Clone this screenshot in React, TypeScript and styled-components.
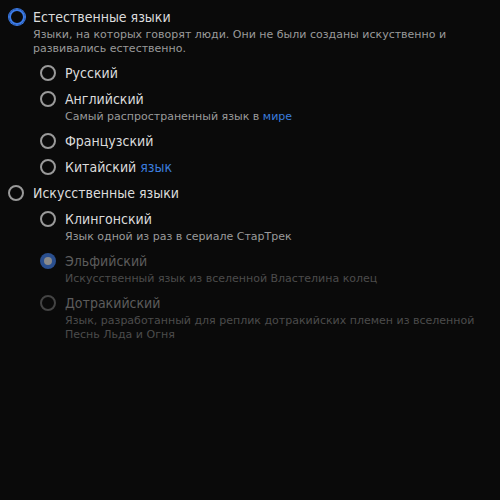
import React from "react";
import styled, { createGlobalStyle, css } from "styled-components";

const Global = createGlobalStyle`
  html, body { background: #0a0a0a; }
  body {
    margin: 8px;
    font-family: "DejaVu Sans", Verdana, sans-serif;
    color: #dedede;
  }
`;

const List = styled.div<{ $nested?: boolean }>`
  display: flex;
  flex-direction: column;
  gap: 8px;
  padding-left: ${(p) => (p.$nested ? "32px" : "0")};
  margin-top: ${(p) => (p.$nested ? "8px" : "0")};
`;

const Item = styled.div`
  display: flex;
  flex-direction: column;
`;

const Row = styled.label`
  display: flex;
  align-items: center;
  gap: 9px;
  height: 18px;
`;

const Circle = styled.span<{ $focus?: boolean; $checked?: boolean; $disabled?: boolean }>`
  box-sizing: border-box;
  width: 16px;
  height: 16px;
  border-radius: 50%;
  border: 2px solid #9a9a9a;
  display: flex;
  align-items: center;
  justify-content: center;
  flex: none;
  ${(p) =>
    p.$focus &&
    css`
      border-color: #3b7be8;
      box-shadow: 0 0 0 1px #3b7be8;
      margin: 0 -1px 0 1px;
    `}
  ${(p) =>
    p.$disabled &&
    css`
      border-color: #444;
    `}
  ${(p) =>
    p.$checked &&
    css`
      border: none;
      background: #2a4f8f;
      &::after {
        content: "";
        width: 8px;
        height: 8px;
        border-radius: 50%;
        background: #8a8a8a;
      }
    `}
`;

const Label = styled.span<{ $disabled?: boolean }>`
  font-family: "DejaVu Sans Condensed", "DejaVu Sans", sans-serif;
  font-stretch: condensed;
  font-size: 14px;
  line-height: 18px;
  color: ${(p) => (p.$disabled ? "#5c5c5c" : "#dcdcdc")};
`;

const Desc = styled.div<{ $disabled?: boolean; $indent: number }>`
  font-size: 11px;
  line-height: 14px;
  margin-top: 2px;
  padding-left: ${(p) => p.$indent}px;
  color: ${(p) => (p.$disabled ? "#4c4c4c" : "#9a9a9a")};
`;

const Link = styled.span`
  color: #3b7ddd;
`;

type Opt = {
  label: React.ReactNode;
  desc?: React.ReactNode;
  focus?: boolean;
  checked?: boolean;
  disabled?: boolean;
  children?: Opt[];
};

const data: Opt[] = [
  {
    label: "Естественные языки",
    desc: "Языки, на которых говорят люди. Они не были созданы искуственно и развивались естественно.",
    focus: true,
    children: [
      { label: "Русский" },
      { label: "Английский", desc: <>Самый распространенный язык в <Link>мире</Link></> },
      { label: "Французский" },
      { label: <>Китайский <Link>язык</Link></> },
    ],
  },
  {
    label: "Искусственные языки",
    children: [
      { label: "Клингонский", desc: "Язык одной из раз в сериале СтарТрек" },
      { label: "Эльфийский", desc: "Искусственный язык из вселенной Властелина колец", checked: true, disabled: true },
      {
        label: "Дотракийский",
        desc: "Язык, разработанный для реплик дотракийских племен из вселенной Песнь Льда и Огня",
        disabled: true,
      },
    ],
  },
];

function Option({ o }: { o: Opt }) {
  return (
    <Item>
      <Row>
        <Circle $focus={o.focus} $checked={o.checked} $disabled={o.disabled} />
        <Label $disabled={o.disabled}>{o.label}</Label>
      </Row>
      {o.desc && (
        <Desc $disabled={o.disabled} $indent={25}>
          {o.desc}
        </Desc>
      )}
      {o.children && (
        <List $nested>
          {o.children.map((c, i) => (
            <Option key={i} o={c} />
          ))}
        </List>
      )}
    </Item>
  );
}

export default function App() {
  return (
    <>
      <Global />
      <List>
        {data.map((o, i) => (
          <Option key={i} o={o} />
        ))}
      </List>
    </>
  );
}
